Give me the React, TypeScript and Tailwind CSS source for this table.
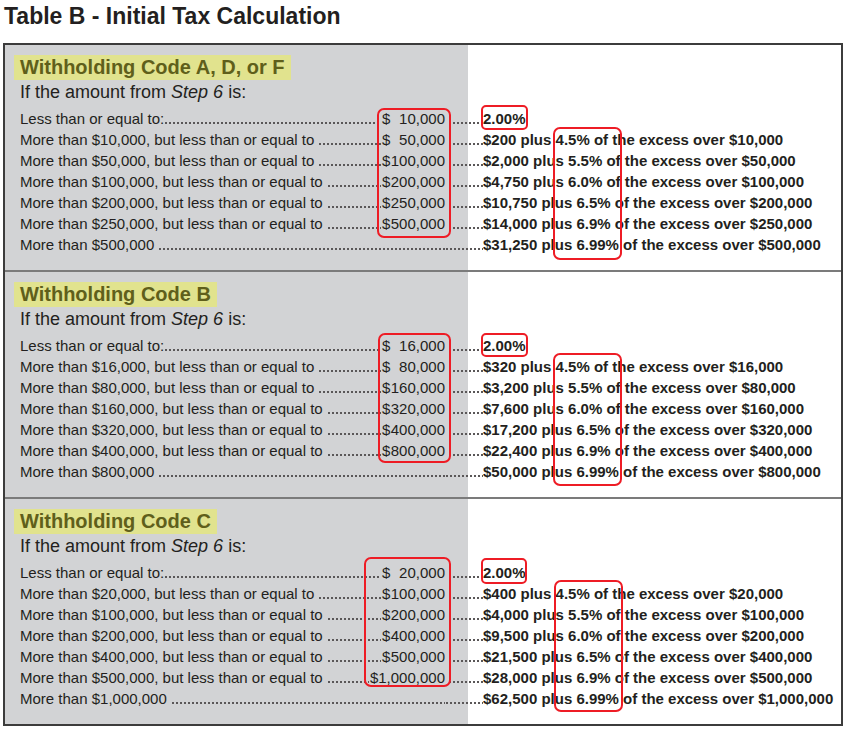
type Row = [string, string | null, string];

type Section = {
  title: string;
  rows: Row[];
  amountBox: string;
  rateBox: string;
  pctBox: string;
};

const sections: Section[] = [
  {
    title: "Withholding Code A, D, or F",
    rows: [
      ["Less than or equal to:", "10,000", "2.00%"],
      ["More than $10,000, but less than or equal to", "50,000", "$200 plus 4.5% of the excess over $10,000"],
      ["More than $50,000, but less than or equal to", "100,000", "$2,000 plus 5.5% of the excess over $50,000"],
      ["More than $100,000, but less than or equal to", "200,000", "$4,750 plus 6.0% of the excess over $100,000"],
      ["More than $200,000, but less than or equal to", "250,000", "$10,750 plus 6.5% of the excess over $200,000"],
      ["More than $250,000, but less than or equal to", "500,000", "$14,000 plus 6.9% of the excess over $250,000"],
      ["More than $500,000", null, "$31,250 plus 6.99% of the excess over $500,000"],
    ],
    amountBox: "left-[372px] top-[0px] w-[74px] h-[130px]",
    rateBox: "left-[476px] top-[-3px] w-[47px] h-[25px]",
    pctBox: "left-[548px] top-[19px] w-[69px] h-[133px]",
  },
  {
    title: "Withholding Code B",
    rows: [
      ["Less than or equal to:", "16,000", "2.00%"],
      ["More than $16,000, but less than or equal to", "80,000", "$320 plus 4.5% of the excess over $16,000"],
      ["More than $80,000, but less than or equal to", "160,000", "$3,200 plus 5.5% of the excess over $80,000"],
      ["More than $160,000, but less than or equal to", "320,000", "$7,600 plus 6.0% of the excess over $160,000"],
      ["More than $320,000, but less than or equal to", "400,000", "$17,200 plus 6.5% of the excess over $320,000"],
      ["More than $400,000, but less than or equal to", "800,000", "$22,400 plus 6.9% of the excess over $400,000"],
      ["More than $800,000", null, "$50,000 plus 6.99% of the excess over $800,000"],
    ],
    amountBox: "left-[373px] top-[-2px] w-[73px] h-[130px]",
    rateBox: "left-[476px] top-[-2px] w-[47px] h-[24px]",
    pctBox: "left-[548px] top-[18px] w-[69px] h-[133px]",
  },
  {
    title: "Withholding Code C",
    rows: [
      ["Less than or equal to:", "20,000", "2.00%"],
      ["More than $20,000, but less than or equal to", "100,000", "$400 plus 4.5% of the excess over $20,000"],
      ["More than $100,000, but less than or equal to", "200,000", "$4,000 plus 5.5% of the excess over $100,000"],
      ["More than $200,000, but less than or equal to", "400,000", "$9,500 plus 6.0% of the excess over $200,000"],
      ["More than $400,000, but less than or equal to", "500,000", "$21,500 plus 6.5% of the excess over $400,000"],
      ["More than $500,000, but less than or equal to", "1,000,000", "$28,000 plus 6.9% of the excess over $500,000"],
      ["More than $1,000,000", null, "$62,500 plus 6.99% of the excess over $1,000,000"],
    ],
    amountBox: "left-[359px] top-[-5px] w-[87px] h-[130px]",
    rateBox: "left-[476px] top-[-4px] w-[46px] h-[26px]",
    pctBox: "left-[549px] top-[18px] w-[69px] h-[132px]",
  },
];

// dotted leader, drawn as a repeating background so it never clips text
const leader =
  "bg-[linear-gradient(to_right,#5a5758_2px,transparent_2px)] bg-[length:4px_2px] bg-[position:1px_14px] bg-repeat-x";

function TaxRow({ row }: { row: Row }) {
  const [label, amount, result] = row;
  const gap = label.endsWith(":") ? "" : "pr-[4px]";
  return (
    <div className="flex h-[21px] items-center whitespace-nowrap text-[15px] leading-[21px]">
      <div className="flex h-[21px] w-[440px] shrink-0 pl-[15px]">
        <span className={gap}>{label}</span>
        <span className={`h-[21px] flex-1 ${amount ? "mr-[1px]" : ""} ${leader}`} />
        {amount && (
          <span className="inline-flex min-w-[63px] justify-between">
            <span>$</span>
            <span>{amount}</span>
          </span>
        )}
      </div>
      <span className={`h-[21px] shrink-0 ${amount ? "ml-[3px] w-[35px]" : "w-[38px]"} ${leader}`} />
      <span className="font-bold">{result}</span>
    </div>
  );
}

function CodeSection({ section, first }: { section: Section; first: boolean }) {
  return (
    <section className={first ? "pt-[10px] pb-[15px]" : "border-t-2 border-[#7b7b7b] pt-[10px] pb-[15px]"}>
      <div className="pl-[9px]">
        <span className="inline-block h-[25px] bg-[#e1e38e] px-[6px] text-[20px] font-bold leading-[25px] text-[#5f5f1b]">
          {section.title}
        </span>
      </div>
      <div className="pl-[15px] text-[18px] leading-[22px]">
        If the amount from <i>Step 6</i> is:
      </div>
      <div className="relative mt-[5px]">
        {section.rows.map((r, i) => (
          <TaxRow key={i} row={r} />
        ))}
        <div className={`pointer-events-none absolute rounded-[7px] border-2 border-[#ee1c25] ${section.amountBox}`} />
        <div className={`pointer-events-none absolute rounded-[5px] border-2 border-[#ee1c25] ${section.rateBox}`} />
        <div className={`pointer-events-none absolute rounded-[7px] border-2 border-[#ee1c25] ${section.pctBox}`} />
      </div>
    </section>
  );
}

export default function App() {
  return (
    <div className="h-[732px] w-[848px] bg-white font-['Liberation_Sans',Arial,sans-serif] text-[#231f20]">
      <div className="h-[43px] pl-[4px] pt-[5px] text-[23px] font-bold leading-[23px]">
        Table B - Initial Tax Calculation
      </div>
      <div className="ml-[3px] w-[840px] border-2 border-[#3c3c3c] bg-[linear-gradient(to_right,#d2d3d5_463px,#ffffff_463px)]">
        {sections.map((s, i) => (
          <CodeSection key={s.title} section={s} first={i === 0} />
        ))}
      </div>
    </div>
  );
}
